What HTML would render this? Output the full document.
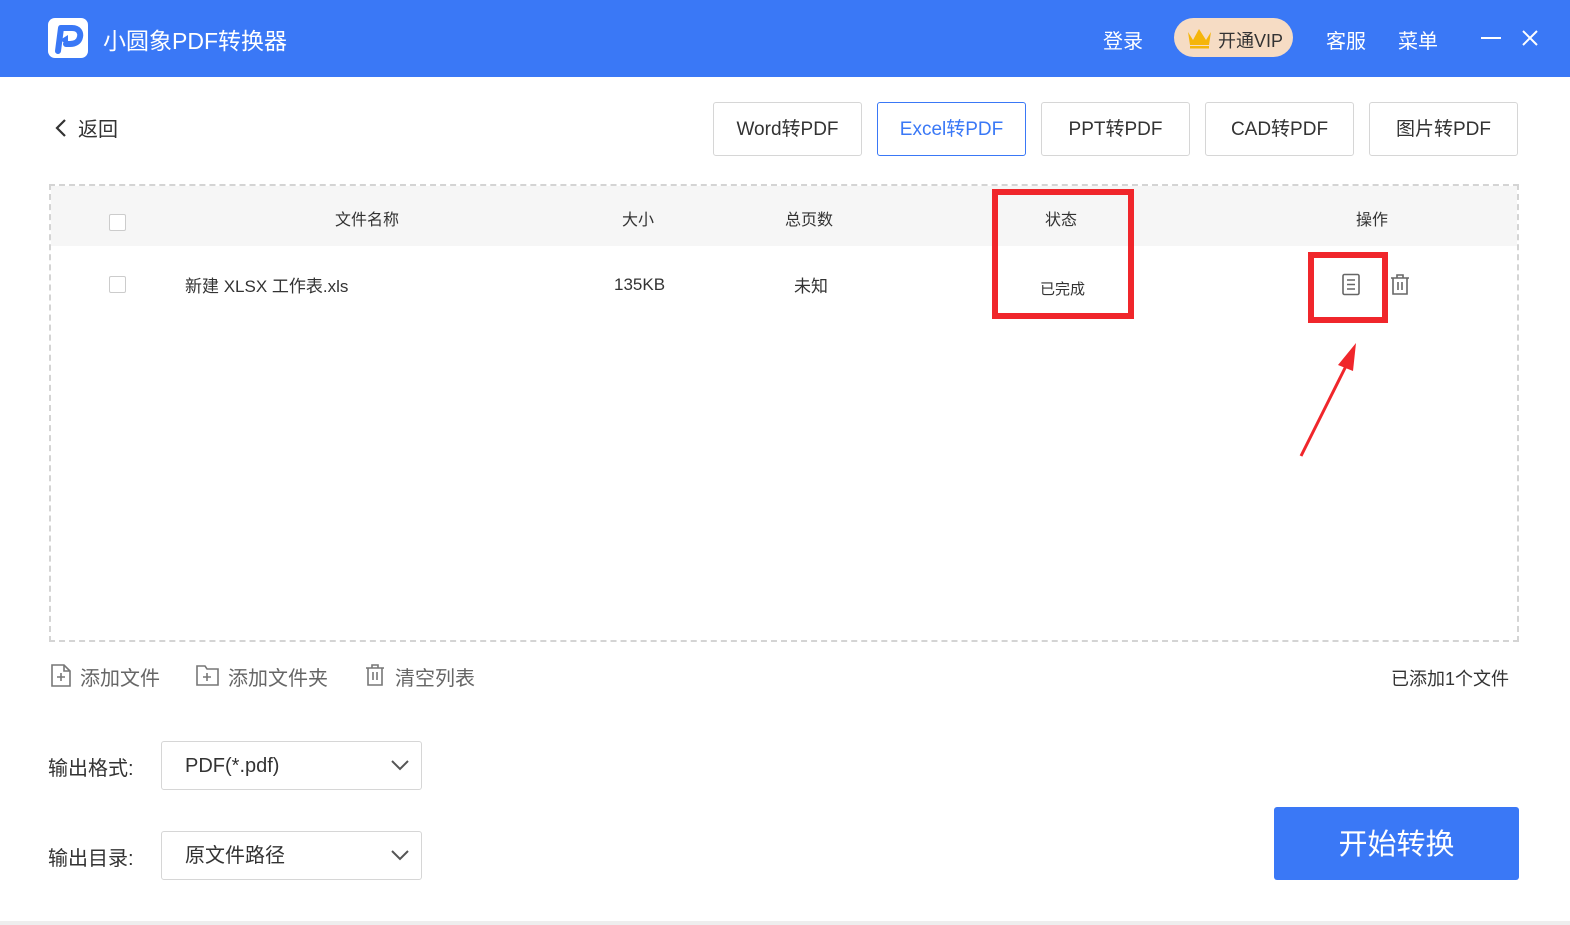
<!DOCTYPE html>
<html><head><meta charset="utf-8"><style>
*{margin:0;padding:0;box-sizing:border-box}
body{width:1570px;height:925px;background:#fff;position:relative;overflow:hidden;font-family:"Liberation Sans","Noto Sans CJK SC",sans-serif;color:#333}
.a{position:absolute;white-space:nowrap}
.hdr{position:absolute;left:0;top:0;width:1570px;height:77px;background:#3a78f6}
.tab{position:absolute;top:102px;width:149px;height:54px;border:1px solid #d6d6d6;border-radius:3px;font-size:19px;color:#333;text-align:center;line-height:54px;background:#fff}
.cb{position:absolute;width:17px;height:17px;border:1px solid #ccc;border-radius:2px;background:#fff}
.th{font-size:16px;color:#333}
.sel{position:absolute;left:161px;width:261px;height:49px;border:1px solid #d6d6d6;border-radius:3px;font-size:20px;line-height:49px;padding-left:23px;color:#333}
.red{position:absolute;border:6px solid #f0262b}
</style></head><body>
<div class="hdr"></div>
<div class="a" style="left:48px;top:18px;width:40px;height:40px;background:#fff;border-radius:7px"></div>
<svg class="a" style="left:48px;top:18px" width="40" height="40" viewBox="0 0 40 40"><path d="M10 33 L13 10 H24 C31 10 33 15 32 19 C31 24 27 26 22 26 H18" fill="none" stroke="#3a78f6" stroke-width="6" stroke-linecap="round" stroke-linejoin="round"/><path d="M12 22 L20 17 L20 27Z" fill="#3a78f6"/></svg>
<div class="a" style="left:103px;top:22px;font-size:23px;color:#fff">小圆象PDF转换器</div>
<div class="a" style="left:1103px;top:25px;font-size:20px;color:#fff">登录</div>
<div class="a" style="left:1174px;top:18px;width:119px;height:39px;border-radius:20px;background:#f6dcc4"></div>
<svg class="a" style="left:1186px;top:27px" width="27" height="22" viewBox="0 0 27 22"><path d="M2 5 L7 13 L13 2 L20 13 L25 5 L23 18 H4Z" fill="#f5b50a"/><rect x="4" y="19" width="19" height="2.5" fill="#f5b50a"/></svg>
<div class="a" style="left:1218px;top:27px;font-size:18px;color:#333">开通VIP</div>
<div class="a" style="left:1326px;top:25px;font-size:20px;color:#fff">客服</div>
<div class="a" style="left:1398px;top:25px;font-size:20px;color:#fff">菜单</div>
<div class="a" style="left:1481px;top:37px;width:20px;height:2px;background:#fff"></div>
<svg class="a" style="left:1521px;top:29px" width="18" height="18" viewBox="0 0 18 18"><path d="M2 2L16 16M16 2L2 16" stroke="#fff" stroke-width="2"/></svg>

<svg class="a" style="left:54px;top:118px" width="14" height="20" viewBox="0 0 14 20"><path d="M11 2L3 10L11 18" fill="none" stroke="#333" stroke-width="2.2"/></svg>
<div class="a" style="left:78px;top:113px;font-size:20px;color:#333">返回</div>

<div class="tab" style="left:713px">Word转PDF</div>
<div class="tab" style="left:877px;border-color:#3a78f6;color:#3a78f6">Excel转PDF</div>
<div class="tab" style="left:1041px">PPT转PDF</div>
<div class="tab" style="left:1205px">CAD转PDF</div>
<div class="tab" style="left:1369px">图片转PDF</div>

<div class="a" style="left:49px;top:184px;width:1470px;height:458px;border:2px dashed #d4d4d4"></div>
<div class="a" style="left:51px;top:186px;width:1466px;height:60px;background:#f6f6f6"></div>
<div class="cb" style="left:109px;top:214px"></div>
<div class="a th" style="left:335px;top:206px">文件名称</div>
<div class="a th" style="left:622px;top:206px">大小</div>
<div class="a th" style="left:785px;top:206px">总页数</div>
<div class="a th" style="left:1045px;top:206px">状态</div>
<div class="a th" style="left:1356px;top:206px">操作</div>
<div class="cb" style="left:109px;top:276px"></div>
<div class="a" style="left:185px;top:272px;font-size:17px">新建 XLSX 工作表.xls</div>
<div class="a" style="left:614px;top:275px;font-size:17px">135KB</div>
<div class="a" style="left:794px;top:272px;font-size:17px">未知</div>
<div class="a" style="left:1040px;top:278px;font-size:15px">已完成</div>
<svg class="a" style="left:1341px;top:273px" width="20" height="23" viewBox="0 0 20 23"><rect x="2" y="1.5" width="16" height="20" rx="1.5" fill="none" stroke="#666" stroke-width="1.6"/><path d="M6 7H14M6 11.5H14M6 16H14" stroke="#666" stroke-width="1.6"/></svg>
<svg class="a" style="left:1389px;top:273px" width="22" height="23" viewBox="0 0 22 23"><path d="M2 5H20M8 5V2H14V5M4 5V21H18V5M9 9V17M13 9V17" fill="none" stroke="#666" stroke-width="1.6"/></svg>
<div class="red" style="left:992px;top:189px;width:142px;height:130px"></div>
<div class="red" style="left:1308px;top:252px;width:80px;height:71px"></div>
<svg class="a" style="left:1290px;top:335px" width="80" height="130" viewBox="0 0 80 130"><path d="M11 121L58 27" stroke="#f0262b" stroke-width="3"/><path d="M66 8L48 30L63 36Z" fill="#f0262b"/></svg>

<svg class="a" style="left:50px;top:663px" width="22" height="25" viewBox="0 0 22 25"><path d="M2 2H14L20 8V23H2Z M14 2V8H20" fill="none" stroke="#777" stroke-width="1.6"/><path d="M7 14H15M11 10V18" stroke="#777" stroke-width="1.6"/></svg>
<div class="a" style="left:80px;top:662px;font-size:20px;color:#666">添加文件</div>
<svg class="a" style="left:195px;top:664px" width="25" height="23" viewBox="0 0 25 23"><path d="M2 2H10L12 5H23V21H2Z" fill="none" stroke="#777" stroke-width="1.6"/><path d="M8 13H16M12 9V17" stroke="#777" stroke-width="1.6"/></svg>
<div class="a" style="left:228px;top:662px;font-size:20px;color:#666">添加文件夹</div>
<svg class="a" style="left:364px;top:663px" width="22" height="24" viewBox="0 0 22 24"><path d="M2 5H20M8 5V2H14V5M4 5V22H18V5M9 9V17M13 9V17" fill="none" stroke="#777" stroke-width="1.6"/></svg>
<div class="a" style="left:395px;top:662px;font-size:20px;color:#666">清空列表</div>
<div class="a" style="left:1391px;top:665px;font-size:18px;color:#333">已添加1个文件</div>

<div class="a" style="left:48px;top:752px;font-size:20px">输出格式:</div>
<div class="sel" style="top:741px">PDF(*.pdf)</div>
<svg class="a" style="left:390px;top:759px" width="20" height="12" viewBox="0 0 20 12"><path d="M2 2L10 10L18 2" fill="none" stroke="#555" stroke-width="2"/></svg>
<div class="a" style="left:48px;top:842px;font-size:20px">输出目录:</div>
<div class="sel" style="top:831px">原文件路径</div>
<svg class="a" style="left:390px;top:849px" width="20" height="12" viewBox="0 0 20 12"><path d="M2 2L10 10L18 2" fill="none" stroke="#555" stroke-width="2"/></svg>
<div class="a" style="left:1274px;top:807px;width:245px;height:73px;background:#3a78f6;border-radius:3px;color:#fff;font-size:29px;text-align:center;line-height:76px">开始转换</div>
<div class="a" style="left:0;top:921px;width:1570px;height:4px;background:#eee"></div>
</body></html>
